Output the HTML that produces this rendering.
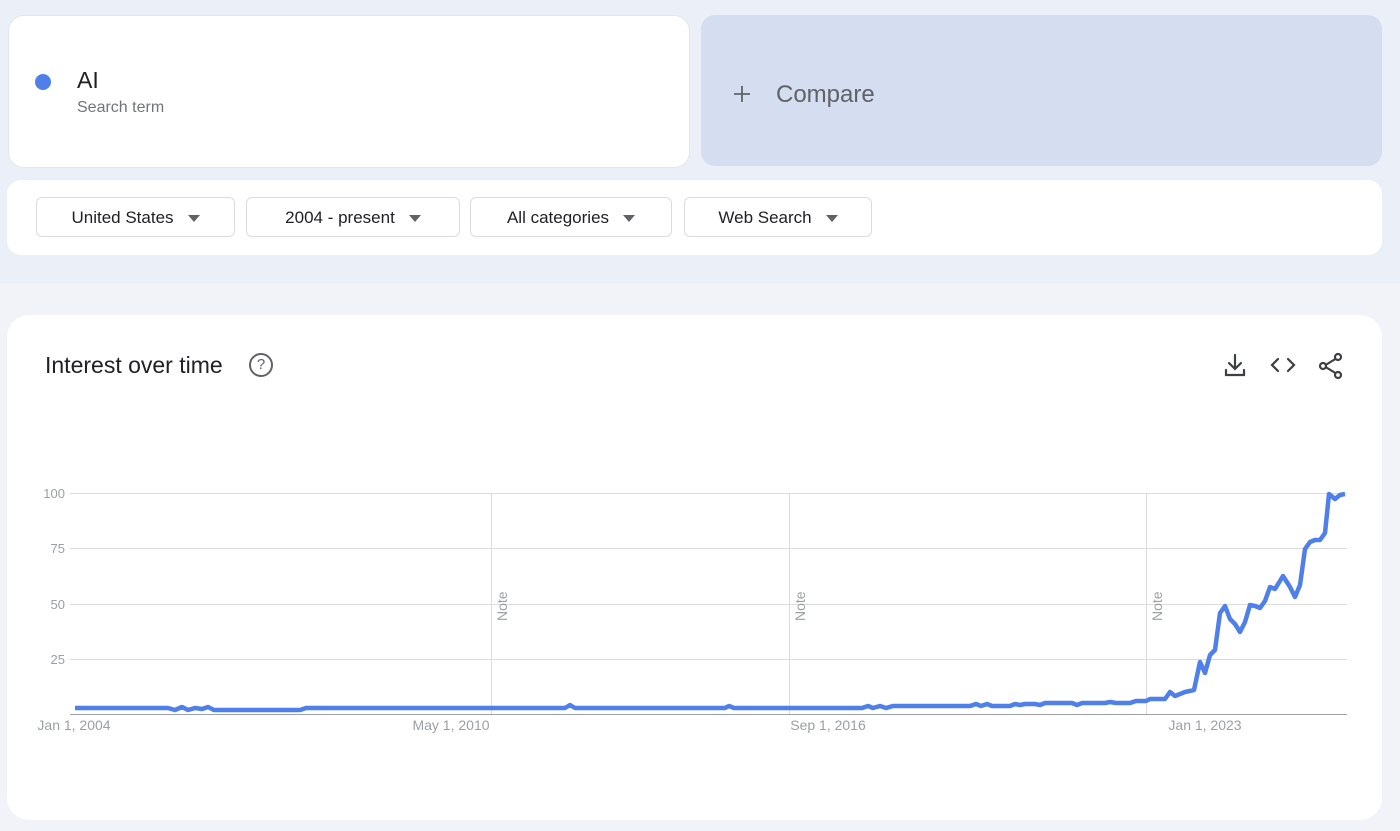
<!DOCTYPE html>
<html><head><style>
body{margin:0;width:1400px;height:831px;background:#f1f3f8;font-family:"Liberation Sans",Arial,sans-serif;position:relative;overflow:hidden}
.top{position:absolute;left:0;top:0;width:1400px;height:283px;background:#ebeff8}
.card{position:absolute;background:#fff;border-radius:16px}
.pill{position:absolute;top:197px;height:40px;border:1px solid #dadce0;border-radius:6px;box-sizing:border-box;display:flex;align-items:center;justify-content:center;font-size:17px;color:#202124;padding-top:2px}
.pill i{display:inline-block;width:0;height:0;border-left:6px solid transparent;border-right:6px solid transparent;border-top:7px solid #5f6368;margin-left:14px}
</style></head><body>
<div class="top"></div>
<div class="card" style="left:8px;top:15px;width:682px;height:153px;border:1px solid #e3e6ee;box-sizing:border-box"></div>
<div style="position:absolute;left:35px;top:74px;width:16px;height:16px;border-radius:50%;background:#4f7fe8"></div>
<div style="position:absolute;left:77px;top:67px;font-size:23px;color:#202124">AI</div>
<div style="position:absolute;left:77px;top:99px;font-size:16px;color:#70757a">Search term</div>
<div style="position:absolute;left:701px;top:15px;width:681px;height:151px;background:#d5ddf0;border-radius:14px"></div>
<svg style="position:absolute;left:733px;top:85px" width="18" height="18"><path d="M9 1v16M1 9h16" stroke="#5f6368" stroke-width="1.8"/></svg>
<div style="position:absolute;left:776px;top:81px;font-size:24px;color:#5f6368">Compare</div>
<div class="card" style="left:7px;top:180px;width:1375px;height:75px;border-radius:14px"></div>
<div class="pill" style="left:36px;width:199px">United States<i></i></div>
<div class="pill" style="left:246px;width:214px">2004 - present<i></i></div>
<div class="pill" style="left:470px;width:202px">All categories<i></i></div>
<div class="pill" style="left:684px;width:188px">Web Search<i></i></div>
<div class="card" style="left:7px;top:315px;width:1375px;height:505px;border-radius:22px"></div>
<div style="position:absolute;left:45px;top:352px;font-size:23px;color:#202124">Interest over time</div>
<div style="position:absolute;left:249px;top:353px;width:20px;height:20px;border:2px solid #5f6368;border-radius:50%;font-size:15px;line-height:20px;text-align:center;color:#5f6368">?</div>
<svg style="position:absolute;left:0;top:0" width="1400" height="831">
<g stroke="#3c4043" stroke-width="2.2" fill="none" stroke-linecap="round">
<path d="M1235 355v14M1229 363l6 6 6-6M1226 370v5h18v-5"/>
<path d="M1278 359l-6 6 6 6M1288 359l6 6-6 6"/>
<path d="M1337 358l-13 8 13 8"/>
</g>
<g fill="#fff" stroke="#3c4043" stroke-width="2.2"><circle cx="1338" cy="357" r="3"/><circle cx="1323" cy="366" r="3"/><circle cx="1338" cy="375" r="3"/></g>
<g stroke="#dadce0" stroke-width="1">
<line x1="70" y1="493.5" x2="1347" y2="493.5"/><line x1="70" y1="548.5" x2="1347" y2="548.5"/><line x1="70" y1="604.5" x2="1347" y2="604.5"/><line x1="70" y1="659.5" x2="1347" y2="659.5"/>
<line x1="491.5" y1="493" x2="491.5" y2="714"/><line x1="789.5" y1="493" x2="789.5" y2="714"/><line x1="1146.5" y1="493" x2="1146.5" y2="714"/>
</g>
<line x1="70" y1="714.5" x2="1347" y2="714.5" stroke="#9aa0a6"/>
<g font-size="13" fill="#9aa0a6" text-anchor="end"><text x="65" y="498">100</text><text x="65" y="553">75</text><text x="65" y="609">50</text><text x="65" y="664">25</text></g>
<g font-size="14" fill="#9aa0a6" text-anchor="middle"><text x="74" y="730">Jan 1, 2004</text><text x="451" y="730">May 1, 2010</text><text x="828" y="730">Sep 1, 2016</text><text x="1205" y="730">Jan 1, 2023</text></g>
<g font-size="14" fill="#9aa0a6"><text transform="translate(507,621) rotate(-90)">Note</text><text transform="translate(805,621) rotate(-90)">Note</text><text transform="translate(1162,621) rotate(-90)">Note</text></g>
<path fill="none" stroke="#4f7fe8" stroke-width="4.5" stroke-linejoin="round" d="M75 708H168L175 710 182 707 188 710 195 708 202 709 208 707 214 710H300L306 708H565L570 705 575 708H725L729 706 734 708H862L868 706 873 708 880 706 886 708 893 706H970L976 704 981 706 987 704 992 706H1010L1015 704 1020 705 1025 704H1035L1040 705 1045 703H1072L1077 705 1082 703H1105L1110 702 1116 703H1130L1136 701H1146L1150 699H1165L1170 692 1175 696 1185 692 1194 690 1200 662 1205 673 1210 655 1215 650 1220 613 1225 606 1230 619 1235 624 1240 632 1245 622 1250 605 1255 606 1260 608 1265 601 1270 587 1275 589 1283 576 1290 587 1295 597 1300 585 1305 549 1310 542 1315 540 1320 540 1325 533 1329 494 1335 499 1340 495 1345 494"/>
</svg>
</body></html>
